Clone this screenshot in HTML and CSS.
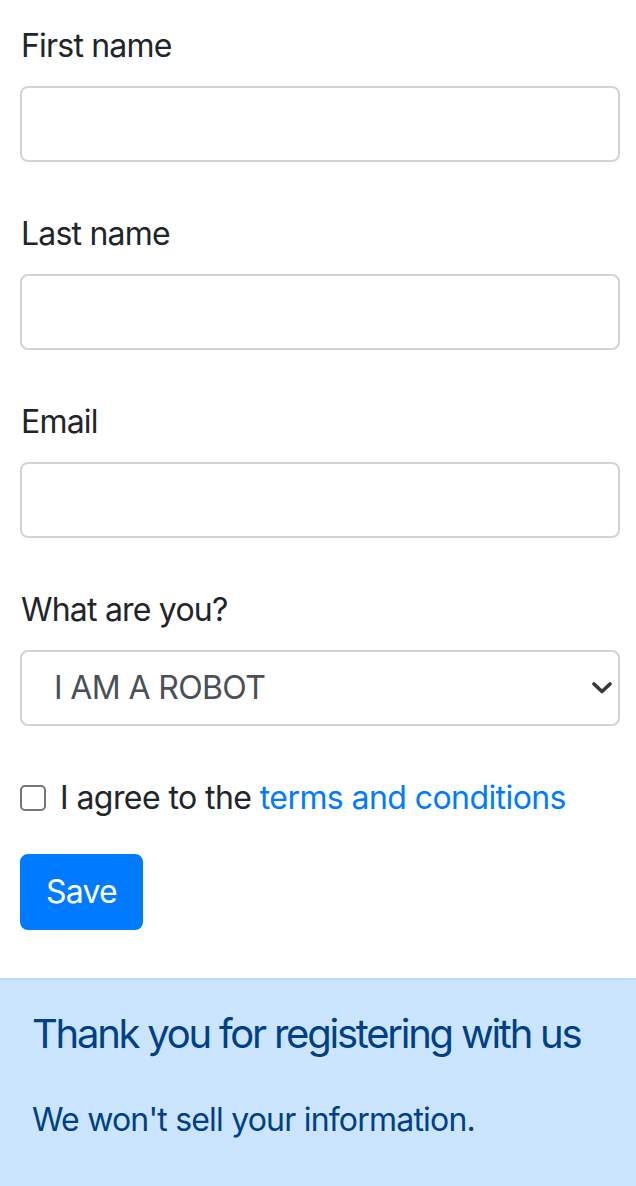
FILE: index.html
```html
<!DOCTYPE html>
<html lang="en">
<head>
<meta charset="utf-8">
<title>Register</title>
<link rel="stylesheet" href="styles.css">
</head>
<body>
<form class="form">
  <div class="field">
    <label class="label" for="first">First name</label>
    <input class="control" id="first" type="text">
  </div>
  <div class="field">
    <label class="label" for="last">Last name</label>
    <input class="control" id="last" type="text">
  </div>
  <div class="field">
    <label class="label" for="email">Email</label>
    <input class="control" id="email" type="email">
  </div>
  <div class="field">
    <label class="label" for="what">What are you?</label>
    <div class="select-wrap">
      <select class="control select" id="what">
        <option>I AM A ROBOT</option>
      </select>
      <svg class="chevron" width="20" height="12" viewBox="0 0 20 12"><path d="M2 2 L10 9.5 L18 2" fill="none" stroke="#343a40" stroke-width="3.6" stroke-linecap="round" stroke-linejoin="round"/></svg>
    </div>
  </div>
  <div class="check-row">
    <input class="check" id="agree" type="checkbox">
    <label class="check-label" for="agree">I agree to the <a class="link" href="#">terms and conditions</a></label>
  </div>
  <button class="btn" type="button">Save</button>
</form>
<div class="alert">
  <h5 class="alert-title">Thank you for registering with us</h5>
  <p class="alert-text">We won't sell your information.</p>
</div>
</body>
</html>
```
FILE: styles.css
```css
* { box-sizing: border-box; }
html, body { margin: 0; padding: 0; }
body {
  font-family: Inter, "Liberation Sans", sans-serif;
  color: #212529;
  background: #fff;
  font-size: 32px;
  line-height: 48px;
  letter-spacing: -0.025em;
}
.form {
  padding: 22px 16px 48px 20px;
}
.field {
  margin-bottom: 48px;
}
.label {
  display: block;
  margin-bottom: 16px;
  font-size: 32px;
  line-height: 48px;
  padding-left: 1px;
}
.control {
  display: block;
  width: 100%;
  height: 76px;
  margin: 0;
  padding: 12px 24px;
  font-family: inherit;
  font-size: 32px;
  line-height: 48px;
  letter-spacing: -0.02em;
  color: #495057;
  background: #fff;
  border: 2px solid #ced4da;
  border-radius: 8px;
  outline: none;
}
.select-wrap {
  position: relative;
}
.select {
  -webkit-appearance: none;
  appearance: none;
  padding-left: 32px;
}
.chevron {
  position: absolute;
  right: 8px;
  top: 32px;
  pointer-events: none;
}
.check-row {
  display: flex;
  align-items: center;
  height: 48px;
  margin-bottom: 32px;
}
.check {
  -webkit-appearance: none;
  appearance: none;
  width: 26px;
  height: 26px;
  margin: 0 14px 0 0;
  border: 2px solid #767676;
  border-radius: 5px;
  background: #fff;
  flex: none;
}
.check-label {
  font-size: 32px;
  line-height: 48px;
  letter-spacing: -0.018em;
}
.link {
  color: #007bff;
  text-decoration: none;
}
.btn {
  display: inline-block;
  height: 76px;
  padding: 12px 24px;
  font-family: inherit;
  font-size: 32px;
  line-height: 48px;
  letter-spacing: -0.025em;
  color: #fff;
  background: #007bff;
  border: 2px solid #007bff;
  border-radius: 8px;
}
.alert {
  background: #cce5ff;
  border-top: 2px solid #b8daff;
  color: #004085;
  padding: 30px 32px 64px 32px;
}
.alert-title {
  margin: 0 0 38px 0;
  font-size: 40px;
  line-height: 48px;
  font-weight: 400;
  letter-spacing: -0.056em;
  white-space: nowrap;
}
.alert-text {
  margin: 0;
  font-size: 32px;
  line-height: 48px;
}
```
